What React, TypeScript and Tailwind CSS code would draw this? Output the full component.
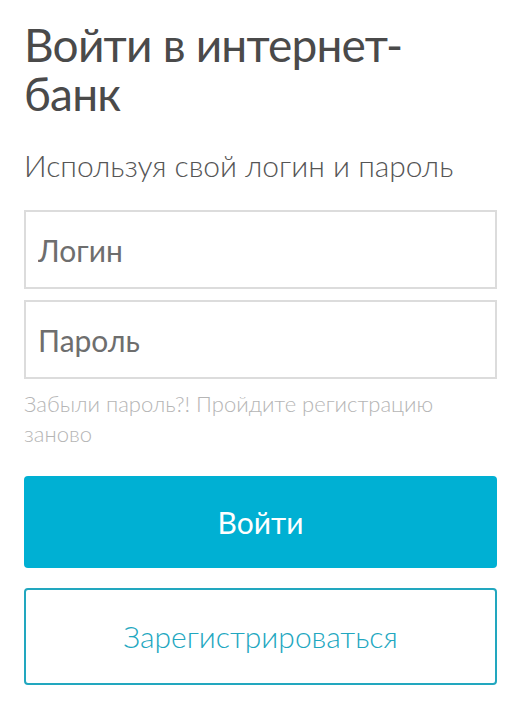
export default function App() {
  return (
    <div className="min-h-screen bg-white pl-6 pr-[33px] pt-[20px] font-['Lato',sans-serif]">
      <h1 className="text-[46px] leading-[49px] font-normal tracking-[-0.8px] text-[#4a4a4a]">
        Войти в интернет-
        <br />
        банк
      </h1>
      <p className="mt-[30px] text-[30px] leading-[34px] font-light text-[#555]">
        Используя свой логин и пароль
      </p>

      <form className="mt-[28px] flex flex-col gap-[11px]" onSubmit={(e) => e.preventDefault()}>
        <input
          type="text"
          placeholder="Логин"
          className="h-[79px] w-full border-2 border-[#dcdcdc] px-3 text-[30px] text-[#444] placeholder:text-[#6e6e6e] outline-none"
        />
        <input
          type="password"
          placeholder="Пароль"
          className="h-[79px] w-full border-2 border-[#dcdcdc] px-3 text-[30px] text-[#444] placeholder:text-[#6e6e6e] outline-none"
        />
      </form>

      <p className="mt-[10px] text-[22px] leading-[30px] font-light text-[#b5b5b5]">
        Забыли пароль?! Пройдите регистрацию заново
      </p>

      <button className="mt-[27px] flex h-[92px] w-full items-center justify-center rounded-[4px] bg-[#00b0d3] text-[30px] text-white">
        Войти
      </button>
      <button className="mt-[20px] flex h-[97px] w-full items-center justify-center rounded-[4px] border-2 border-[#22a7bf] bg-white text-[30px] font-light text-[#22a7bf]">
        Зарегистрироваться
      </button>
    </div>
  )
}
